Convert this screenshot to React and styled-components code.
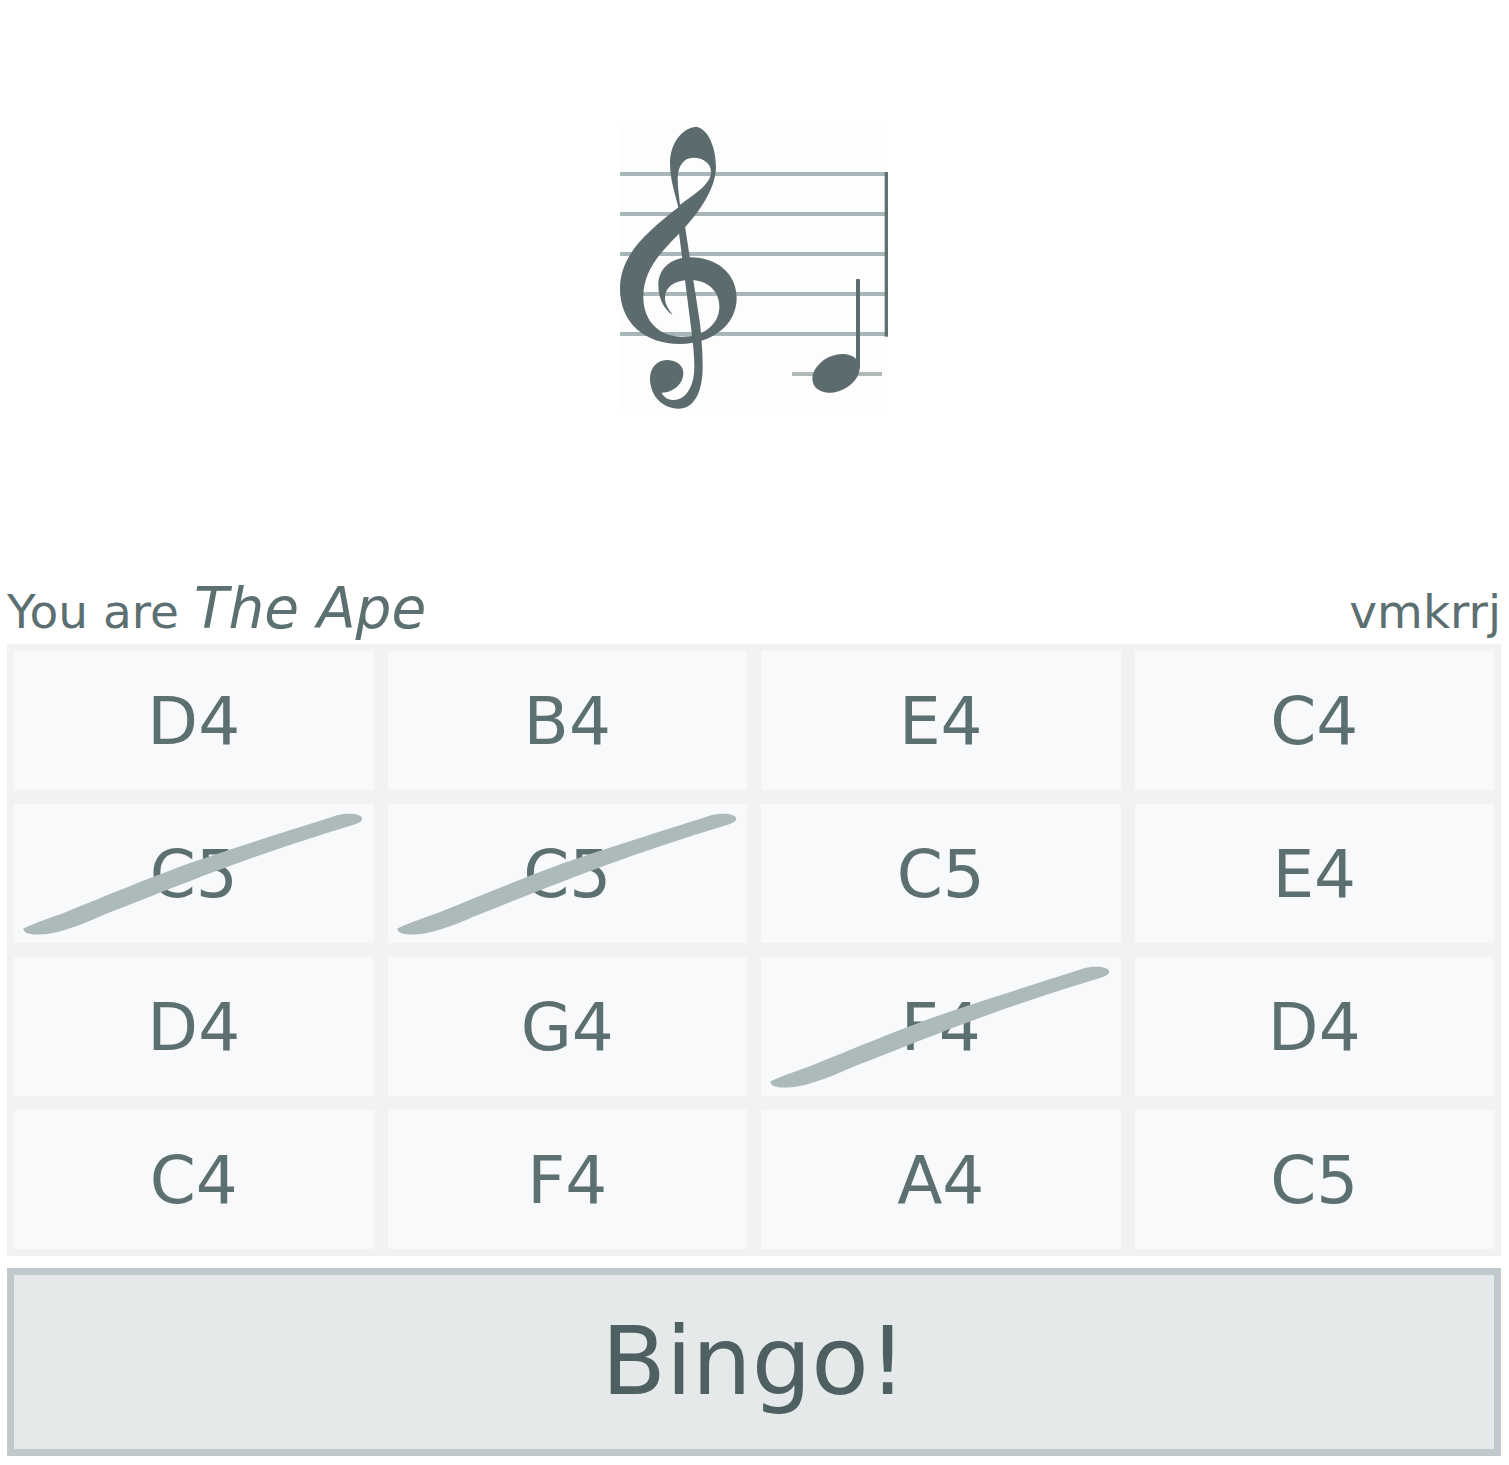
import React from 'react';
import styled, { createGlobalStyle } from 'styled-components';

const cells = [
    { note: 'D4' }, { note: 'B4' }, { note: 'E4' }, { note: 'C4' },
    { note: 'C5', struck: true }, { note: 'C5', struck: true }, { note: 'C5' }, { note: 'E4' },
    { note: 'D4' }, { note: 'G4' }, { note: 'F4', struck: true }, { note: 'D4' },
    { note: 'C4' }, { note: 'F4' }, { note: 'A4' }, { note: 'C5' },
];

const Staff = () => (
    <StaffSvg viewBox="0 0 930 930">
        <rect x="60" y="50" width="804" height="850" fill="#fdfdfd" />
        {[192, 312, 432, 552, 672].map((y) => (
            <rect key={y} x="60" y={y - 6} width="798" height="12" fill="#a8b6b8" />
        ))}
        <rect x="854" y="186" width="10" height="494" fill="#5f7173" />
        <rect x="576" y="786" width="270" height="12" fill="#aebbba" />
        <g fill="#5c6c6e">
            {/* clef body */}
            <path
                fillRule="evenodd"
                d="M288 50 C325 55 348 115 348 170 C348 235 298 305 248 360 C200 410 130 470 130 560 C130 640 185 680 245 680 C315 680 358 640 358 590 C358 540 320 510 270 510 C225 510 195 530 195 565 C195 585 208 600 218 615 C195 600 175 570 175 525 C175 475 215 442 272 442 C350 442 410 490 410 565 C410 645 335 702 240 702 C135 702 60 640 60 535 C60 430 150 360 235 292 C222 240 210 205 210 160 C210 100 245 55 288 50 Z M280 143 C250 143 233 170 233 205 C233 232 237 258 240 284 C287 250 333 222 333 185 C333 160 310 143 280 143 Z"
            />
            {/* clef stem and tail */}
            <path d="M232 330 L252 330 L300 640 C305 690 308 730 308 770 C308 850 280 896 235 896 C190 896 150 860 150 805 C150 775 170 750 200 750 C228 750 250 765 250 790 C250 820 222 848 185 848 C192 866 215 874 235 868 C265 858 283 820 283 770 C283 735 279 700 274 660 Z" />
            {/* note */}
            <ellipse cx="708" cy="790" rx="75" ry="53" transform="rotate(-27 708 790)" />
            <rect x="768" y="507" width="12" height="270" rx="3" />
        </g>
    </StaffSvg>
);

const Stroke = () => (
    <StrokeSvg viewBox="0 0 1080 416">
        <path
            d="M28 373 C70 353 120 338 158 323 C280 273 400 224 508 184 C620 144 800 88 968 34 C1000 24 1046 28 1046 43 C1046 54 1030 59 1018 62 C880 104 760 144 658 182 C560 218 380 289 258 337 C220 354 130 392 78 391 C50 392 28 388 28 373 Z"
            fill="#adbaba"
        />
    </StrokeSvg>
);

const App = () => {
    return (
        <Page>
            <GlobalStyle />
            <Stage>
                <Staff />
            </Stage>
            <Info>
                <Role>
                    You are <RoleName>The Ape</RoleName>
                </Role>
                <Code>vmkrrj</Code>
            </Info>
            <Board>
                {cells.map((cell, i) => (
                    <Cell key={i}>
                        {cell.note}
                        {cell.struck && <Stroke />}
                    </Cell>
                ))}
            </Board>
            <BingoButton>Bingo!</BingoButton>
        </Page>
    );
};

export default App;

const GlobalStyle = createGlobalStyle`
    body {
        margin: 0;
        background: #fff;
        font-family: "DejaVu Sans", "Liberation Sans", sans-serif;
        color: #5c6f71;
    }
`;

const Page = styled.div`
    width: 1494px;
    margin: 0 0 0 7px;
    height: 1465px;
`;

const Stage = styled.div`
    height: 570px;
    padding: 110px 0 0 2px;
    box-sizing: border-box;
    display: flex;
    justify-content: center;
`;

const StaffSvg = styled.svg`
    display: block;
    width: 310px;
    height: 310px;
`;

const Info = styled.div`
    height: 74px;
    box-sizing: border-box;
    padding-top: 4px;
    display: flex;
    justify-content: space-between;
    align-items: baseline;
    font-size: 47px;
    line-height: 70px;
`;

const Role = styled.div``;

const RoleName = styled.em`
    font-size: 56.5px;
`;

const Code = styled.div``;

const Board = styled.div`
    display: grid;
    grid-template-columns: repeat(4, 1fr);
    grid-auto-rows: 153px;
    padding: 0;
    background: #f1f3f2;
    height: 612px;
`;

const Cell = styled.div`
    position: relative;
    margin: 7px;
    padding-top: 1px;
    box-sizing: border-box;
    background: #f8f9fb;
    display: flex;
    align-items: center;
    justify-content: center;
    font-size: 66px;
`;

const StrokeSvg = styled.svg`
    position: absolute;
    left: 0;
    top: 0;
    width: 100%;
    height: 100%;
`;

const BingoButton = styled.button`
    display: block;
    width: 100%;
    height: 188px;
    margin-top: 12px;
    box-sizing: border-box;
    border: 7px solid #bfc8cb;
    background: #e5e9ea;
    color: #4f6062;
    font-family: inherit;
    font-size: 94px;
    padding: 0 0 2px;
`;
